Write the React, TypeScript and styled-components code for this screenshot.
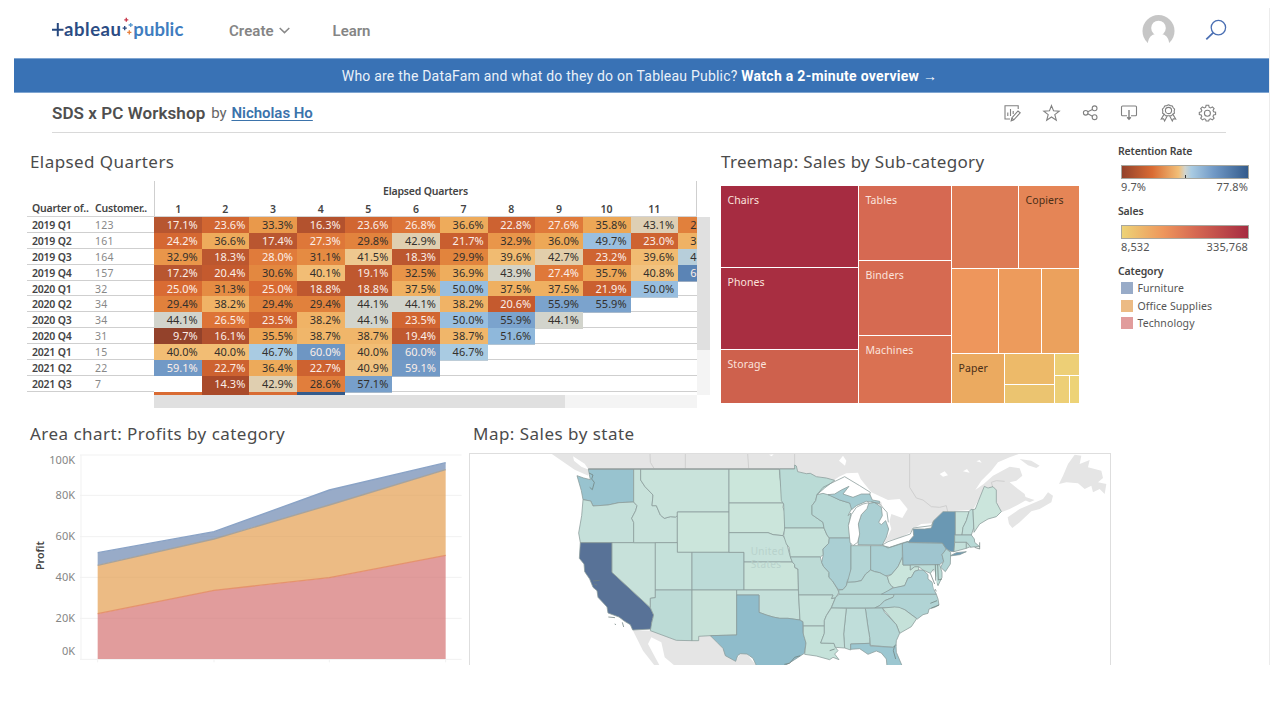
import React from "react";
import styled, { createGlobalStyle } from "styled-components";

const GlobalStyle = createGlobalStyle`
  * { box-sizing: border-box; }
  body { margin: 0; background: #fff; overflow: hidden; }
`;

const viz = `"Noto Sans", "Open Sans", sans-serif`;
const ui = `Roboto, "Liberation Sans", sans-serif`;

const Frame = styled.div`
  width: 1256px;
  height: 657px;
  margin: 8px 0 49px 14px;
  border-right: 1px solid #ececec;
  overflow: hidden;
  font-family: ${viz};
  color: #444;
`;

const Header = styled.header`
  display: flex;
  align-items: center;
  height: 50px;
  padding: 0 42px 6px 36px;
`;

const Logo = styled.svg`
  display: block;
  width: 136px;
  height: 30px;
`;

const NavItem = styled.a<{ $left: number; $track: number }>`
  display: flex;
  align-items: center;
  gap: 5px;
  margin-left: ${(p) => p.$left}px;
  padding-top: 1px;
  font: 600 15px/20px ${ui};
  letter-spacing: ${(p) => p.$track}px;
  color: #858585;
`;

const Avatar = styled.svg`
  width: 33px;
  height: 33px;
  margin-left: auto;
  margin-right: 30px;
`;

const Banner = styled.div`
  display: flex;
  align-items: center;
  justify-content: center;
  height: 35px;
  padding-right: 4px;
  background: #3972b5;
  border-top: 1px solid #7fa5d1;
  border-bottom: 1px solid #7fa5d1;
  color: #eaf1f9;
  font: 400 14px/20px ${ui};
  letter-spacing: 0.21px;
  white-space: pre;
  b { color: #fff; letter-spacing: 0.28px; }
`;

const TitleBar = styled.div`
  display: flex;
  align-items: center;
  height: 40px;
  margin: 0 43px 0 38px;
  border-bottom: 1px solid #d9d9d9;
  font-family: ${ui};
`;

const WorkbookTitle = styled.h1`
  margin: 0;
  font-size: 17px;
  font-weight: 600;
  letter-spacing: 0.08px;
  color: #4f4f4f;
`;

const Byline = styled.span`
  margin-left: 6px;
  font-size: 15px;
  color: #666;
  a {
    margin-left: 1px;
    font-size: 15px;
    font-weight: 600;
    letter-spacing: -0.03px;
    color: #3b73ab;
    text-decoration: underline;
    text-underline-offset: 2px;
  }
`;

const Toolbar = styled.div`
  display: flex;
  gap: 19px;
  margin-left: auto;
  margin-right: 9px;
  svg {
    width: 20px;
    height: 20px;
    fill: none;
    stroke: #808080;
    stroke-width: 1.1;
  }
`;

const Dashboard = styled.main`
  display: flex;
`;

const Sheets = styled.div`
  width: 1104px;
`;

const SheetRow = styled.div<{ $left: number; $gap: number }>`
  display: flex;
  gap: ${(p) => p.$gap}px;
  padding-left: ${(p) => p.$left}px;
`;

const Sheet = styled.section<{ $width: number }>`
  width: ${(p) => p.$width}px;
  flex: none;
`;

const SheetTitle = styled.h2<{ $height: number; $top: number; $indent?: number; $track: number }>`
  display: flex;
  align-items: center;
  height: ${(p) => p.$height}px;
  margin: 0;
  padding: ${(p) => p.$top}px 0 0 ${(p) => p.$indent ?? 0}px;
  font-size: 17px;
  font-weight: 400;
  letter-spacing: ${(p) => p.$track}px;
  color: #4b4b4b;
  white-space: nowrap;
`;

const Crosstab = styled.div`
  display: grid;
  grid-template-columns: 670px 13px;
  height: 227px;
`;

const TableArea = styled.div`
  height: 213.5px;
  overflow: hidden;
`;

const TableHead = styled.div`
  display: grid;
  grid-template-columns: 127px 1fr;
  height: 36px;
  border-bottom: 1px solid #d4d4d4;
  font-size: 10.5px;
  font-weight: 600;
  color: #444;
`;

const RowHeads = styled.div`
  display: grid;
  grid-template-columns: 63px 1fr;
  align-items: end;
  padding-left: 5px;
  letter-spacing: -0.22px;
  line-height: 15px;
  white-space: nowrap;
`;

const ColumnHeads = styled.div`
  border-left: 1px solid #cfcfcf;
  border-right: 1px solid #cfcfcf;
  overflow: hidden;
`;

const FieldCaption = styled.div`
  height: 20px;
  padding-top: 3px;
  letter-spacing: -0.2px;
  line-height: 15px;
  text-align: center;
`;

const Numbers = styled.div`
  display: flex;
  line-height: 17px;
  span { width: 47.67px; flex: none; text-align: center; }
  span:first-child { width: 46.5px; }
`;

const TableRow = styled.div`
  display: grid;
  grid-template-columns: 5px 63px 59px 1fr;
  height: 15.88px;
  border-bottom: 1px solid #cfcfcf;
  font-size: 11px;
  line-height: 16px;
`;

const Quarter = styled.span`
  font-size: 10.5px;
  font-weight: 600;
  letter-spacing: -0.22px;
  color: #444;
`;

const Customers = styled.span`
  font-size: 10.5px;
  letter-spacing: 0.2px;
  color: #888;
`;

const Cells = styled.div`
  display: flex;
  overflow: hidden;
  margin-bottom: -1px;
`;

const Cell = styled.span<{ $bg: string; $light: boolean }>`
  width: 47.67px;
  flex: none;
  padding-right: 4px;
  background: ${(p) => p.$bg};
  border-bottom: 1px solid rgba(205, 205, 205, 0.55);
  color: ${(p) => (p.$light ? "#fbeee8" : "#33302c")};
  text-align: right;
`;

const EdgeCell = styled(Cell)`
  padding-left: 12px;
  text-align: left;
`;

const VerticalScroll = styled.div`
  height: 178px;
  margin-top: 35.5px;
  background: #f4f4f4;
  &::before { content: ""; display: block; height: 133px; background: #e0e0e0; }
`;

const HorizontalScroll = styled.div`
  height: 13.5px;
  margin-left: 127px;
  background: #f4f4f4;
  &::before { content: ""; display: block; width: 411px; height: 100%; background: #e0e0e0; }
`;

const Treemap = styled.div`
  display: grid;
  grid-template-columns: 137px 92px 127px;
  gap: 1px;
  height: 219px;
  margin-top: 4px;
  padding: 1px 0;
`;

const Split = styled.div<{ $rows?: string; $cols?: string }>`
  display: grid;
  gap: 1px;
  min-width: 0;
  min-height: 0;
  grid-template-rows: ${(p) => p.$rows ?? "1fr"};
  grid-template-columns: ${(p) => p.$cols ?? "1fr"};
`;

const Tile = styled.div<{ $bg: string; $dark?: boolean }>`
  padding: 7px 0 0 6.5px;
  min-width: 0;
  background: ${(p) => p.$bg};
  color: ${(p) => (p.$dark ? "#4a2e17" : "#fbe3dc")};
  font-size: 10.5px;
  line-height: 15px;
  letter-spacing: 0.1px;
`;

const MapFrame = styled.div`
  height: 212px;
  border: 1px solid #dedede;
  border-bottom: 0;
  svg { display: block; }
`;

const Legends = styled.aside`
  width: 131px;
  padding-top: 11px;
  font-size: 10.5px;
  line-height: 16px;
`;

const LegendTitle = styled.h3`
  margin: 0;
  font-size: 10.5px;
  font-weight: 600;
  letter-spacing: -0.15px;
  line-height: 15px;
  color: #444;
`;

const Ramp = styled.div<{ $colors: string }>`
  display: flex;
  justify-content: center;
  align-items: flex-end;
  height: 14px;
  margin: 6px 0 0 3px;
  border: 1px solid #a8a8a0;
  background: linear-gradient(90deg, ${(p) => p.$colors});
`;

const Tick = styled.i`
  width: 1px;
  height: 3px;
  background: #333;
`;

const Range = styled.div`
  display: flex;
  justify-content: space-between;
  margin: 0 1px 9px 3px;
  font-size: 11px;
  letter-spacing: 0.1px;
  color: #555;
`;

const Entry = styled.div`
  display: flex;
  align-items: center;
  gap: 4.5px;
  height: 17.7px;
  padding-left: 3px;
  letter-spacing: 0.08px;
  color: #555;
`;

const Swatch = styled.i<{ $bg: string }>`
  width: 12px;
  height: 12px;
  background: ${(p) => p.$bg};
`;

const stops: [number, string][] = [
  [9.7, "#93422b"], [14.3, "#a94a2a"], [17.2, "#b85630"], [20.6, "#c55a2e"],
  [23.2, "#cf6431"], [25, "#d96b33"], [28, "#e07b3b"], [30, "#e2843d"],
  [33, "#e9974a"], [36, "#eda857"], [38.5, "#f0b568"], [40.5, "#f2bf78"],
  [41.5, "#eec88f"], [43, "#dfcfb2"], [44.1, "#d2d4cc"], [46.7, "#a9cbe2"],
  [49.8, "#99bfdf"], [51.6, "#8fb8db"], [55.9, "#7ba3cd"], [59.1, "#7199c6"],
  [65, "#5b84b5"], [77.8, "#335b8c"],
];

const rgb = (hex: string) => [1, 3, 5].map((i) => parseInt(hex.slice(i, i + 2), 16));

function shade(value: number) {
  const i = Math.max(1, stops.findIndex(([v]) => v >= value));
  const [v0, c0] = stops[i - 1];
  const [v1, c1] = stops[i];
  const t = Math.max(0, (value - v0) / (v1 - v0));
  const b = rgb(c1);
  return `rgb(${rgb(c0).map((x, k) => Math.round(x + (b[k] - x) * t)).join(",")})`;
}

const isLight = (v: number) => v < 28.3 || v > 58;

const rows: [string, number, (number | null)[]][] = [
  ["2019 Q1", 123, [17.1, 23.6, 33.3, 16.3, 23.6, 26.8, 36.6, 22.8, 27.6, 35.8, 43.1]],
  ["2019 Q2", 161, [24.2, 36.6, 17.4, 27.3, 29.8, 42.9, 21.7, 32.9, 36.0, 49.7, 23.0]],
  ["2019 Q3", 164, [32.9, 18.3, 28.0, 31.1, 41.5, 18.3, 29.9, 39.6, 42.7, 23.2, 39.6]],
  ["2019 Q4", 157, [17.2, 20.4, 30.6, 40.1, 19.1, 32.5, 36.9, 43.9, 27.4, 35.7, 40.8]],
  ["2020 Q1", 32, [25.0, 31.3, 25.0, 18.8, 18.8, 37.5, 50.0, 37.5, 37.5, 21.9, 50.0]],
  ["2020 Q2", 34, [29.4, 38.2, 29.4, 29.4, 44.1, 44.1, 38.2, 20.6, 55.9, 55.9]],
  ["2020 Q3", 34, [44.1, 26.5, 23.5, 38.2, 44.1, 23.5, 50.0, 55.9, 44.1]],
  ["2020 Q4", 31, [9.7, 16.1, 35.5, 38.7, 38.7, 19.4, 38.7, 51.6]],
  ["2021 Q1", 15, [40.0, 40.0, 46.7, 60.0, 40.0, 60.0, 46.7]],
  ["2021 Q2", 22, [59.1, 22.7, 36.4, 22.7, 40.9, 59.1]],
  ["2021 Q3", 7, [null, 14.3, 42.9, 28.6, 57.1]],
];

const edge: [string, number][] = [["2", 29], ["3", 38], ["4", 45.8], ["6", 65]];

type Shape = [string, string];

const west: Shape[] = [
  ["#98c3cf", "352,180 372,187 392,192 388,172 386,160 522,160 522,259 478,261 445,268 400,271 393,256 370,252 365,225"],
  ["#c5e0da", "370,252 393,256 400,271 445,268 478,261 522,259 532,270 528,285 516,308 522,320 522,381 362,381 357,352 366,300"],
  ["#587297", "362,381 457,381 457,470 572,576 582,598 576,622 578,640 519,643 512,627 495,617 478,604 445,592 442,574 415,545 412,525 400,515 390,490 375,468 373,445 359,428"],
  ["#c7e1da", "457,381 587,381 587,546 572,548 572,576 457,470"],
  ["#c8e2db", "522,160 543,160 543,193 556,213 580,238 577,270 590,270 602,298 614,308 632,303 648,304 653,298 653,381 522,381 522,320 516,308 528,285 532,270 522,259"],
  ["#c9e3db", "543,160 808,160 808,289 653,289 653,300 648,304 632,303 614,308 602,298 590,270 577,270 580,238 556,213 543,193"],
  ["#cbe5db", "653,289 808,289 808,410 653,410"],
  ["#c5e1da", "587,381 653,381 653,410 697,410 697,523 587,523"],
  ["#bcdbd7", "697,410 853,410 853,523 697,523"],
  ["#bcdbd6", "587,523 697,523 697,675 650,674 572,645 576,622 582,598 572,576 572,548 587,546"],
  ["#c8e2d9", "697,523 831,523 831,658 752,660 717,662 717,675 697,675"],
  ["#cbe6db", "808,160 959,160 960,180 966,220 972,262 808,262"],
  ["#cbe5db", "808,262 972,262 970,275 976,290 976,340 970,360 940,357 925,351 808,351"],
  ["#c7e2db", "808,351 925,351 940,357 970,360 980,375 988,410 998,439 853,439 853,410 808,410"],
  ["#cae4da", "853,439 998,439 1005,447 1005,455 1015,462 1016,523 853,523"],
  ["#c5e0da", "831,523 1016,523 1021,613 985,608 960,608 940,604 920,598 898,590 898,538 831,538"],
  ["#8fbccb", "831,538 898,538 898,590 920,598 940,604 960,608 985,608 1021,613 1030,618 1030,650 1039,682 1034,713 1000,735 975,750 890,750 880,728 862,715 842,714 834,720 828,737 797,720 790,698 772,680 752,660 831,658"],
];

const east: Shape[] = [
  ["#badbd6", "0,85 45,85 45,73 50,76 54,93 80,99 92,98 110,108 140,112 165,119 135,142 112,162 108,180 97,195 97,222 130,245 133,262 15,262 12,190 5,180"],
  ["#c6e2da", "15,262 133,262 142,283 149,292 147,308 130,325 131,342 122,349 32,349 28,320 20,310 12,285"],
  ["#bddbd6", "32,349 122,349 126,365 132,378 148,395 148,410 158,420 172,443 178,455 167,472 155,474 160,463 57,463 55,385 45,380 45,372 38,364"],
  ["#c5e1da", "57,463 160,463 155,474 167,472 155,500 140,525 134,540 134,556 71,556 70,543 61,538"],
  ["#c5e2da", "71,556 134,556 134,578 123,607 163,608 167,620 175,630 165,640 178,657 160,650 150,657 110,646 75,641 79,607 71,580"],
  ["#b8d9d6", "112,162 130,158 155,165 180,178 210,187 218,200 205,225 214,217 208,250 211,292 149,292 142,283 133,262 130,245 97,222 97,195 108,180"],
  ["#aacfd3", "149,292 211,292 214,310 214,385 210,410 203,420 200,435 190,447 175,446 158,420 148,410 148,395 132,378 126,365 131,342 130,325 147,308"],
  ["#b3d5d5", "214,315 273,315 273,388 258,400 245,420 225,424 203,425 214,385"],
  ["#abd0d4", "273,315 308,315 330,320 368,307 368,350 355,378 335,402 315,406 300,396 285,393 273,388"],
  ["#aacfd3", "235,312 238,280 235,250 245,222 260,205 262,190 285,185 305,200 308,225 297,245 305,252 318,240 327,265 320,290 308,313"],
  ["#a5ccd2", "145,162 165,160 185,148 208,137 190,160 220,170 245,160 270,160 278,178 300,182 300,188 260,182 230,195 216,207 210,187 180,178"],
  ["#b8d9d6", "178,461 177,448 190,447 200,435 203,425 225,424 245,420 258,400 273,388 285,393 300,396 323,408 328,425 340,440 320,455 305,461"],
  ["#b9d9d6", "168,470 178,461 344,461 340,470 315,480 300,495 285,502 155,502"],
  ["#cae5dc", "323,408 335,402 355,378 368,350 370,373 392,373 392,388 405,378 417,378 417,388 405,392 395,410 385,412 375,435 345,442 335,436 328,425"],
  ["#abd0d4", "305,461 340,442 375,435 385,412 395,410 405,392 417,388 430,388 445,402 445,415 458,425 462,445 470,461"],
  ["#b1d4d5", "285,502 300,495 315,480 340,470 344,461 470,461 475,475 478,493 465,500 448,505 445,518 430,522 413,535 375,507 345,500"],
  ["#c5e1d9", "308,502 345,499 358,500 375,507 411,534 395,558 360,578 350,552"],
  ["#b5d7d6", "257,503 308,502 315,515 350,552 360,578 350,600 349,615 340,620 272,614 270,590 265,560"],
  ["#c0deda", "200,503 257,503 265,560 270,590 270,608 213,610 213,628 195,622 192,580"],
  ["#c4e0da", "155,502 200,503 192,580 195,622 167,620 163,608 123,607 134,578 134,540 140,525"],
  ["#9cc7d1", "213,610 270,608 272,616 340,620 349,612 350,635 368,677 322,677 320,655 305,637 290,631 265,641 240,624 213,626"],
  ["#9fc5cf", "368,307 385,302 388,306 488,307 500,325 487,342 492,362 480,372 370,373"],
  ["#6a98b3", "385,305 402,285 400,265 435,265 455,262 462,240 490,213 527,213 527,283 523,333 512,332 500,325 488,307"],
  ["#6a98b3", "510,346 530,336 560,333 540,342"],
  ["#b1d4d5", "500,325 513,335 512,370 497,393 483,380 492,362 487,342"],
  ["#bcdcd7", "392,373 480,372 487,395 487,410 475,435 468,420 462,385 452,398 430,388 417,378 405,378 392,388"],
  ["#c8e3dc", "527,213 568,213 560,240 550,260 547,283 527,283"],
  ["#c1dfda", "568,213 574,206 580,207 582,262 575,283 547,283 550,260 560,240"],
  ["#cbe5dc", "580,207 587,205 600,172 614,137 625,142 640,138 650,148 650,185 665,213 650,228 625,235 600,250 583,275"],
  ["#b8d9d6", "525,283 575,283 584,295 585,305 600,318 588,318 572,320 562,305 525,305"],
  ["#c3e0da", "525,305 560,305 560,323 523,333"],
  ["#c3e0da", "560,305 572,318 560,323"],
];

const details = "M388,172 400,178 396,190 404,200 398,222 390,215 M400,496 420,494 M404,505 412,508 M446,604 466,606 M488,620 492,634 M465,625 469,627";
const eastDetails = "M452,398 465,430 M467,372 468,420 M474,372 476,418 487,415 M466,445 470,452 M452,488 472,480 M455,502 478,493 M345,615 341,630 348,655 M600,305 600,325 585,320 M150,630 165,625 M62,645 45,650 30,668 14,671";

function StateMap() {
  return (
    <svg width="640" height="211" viewBox="31 115 1920 633" preserveAspectRatio="none">
      <g fill="#e5e5e5">
        <path d="M275,114 L345,162 L386,180 L386,160 L1010,160 L1010,114Z" />
        <path d="M519,643 L572,645 L650,674 L717,675 L717,662 L752,660 L790,698 L828,737 L842,714 L862,715 L890,750 L645,750 L615,725 L605,680 L575,665 L565,685 L600,750 L585,750 L550,705Z" />
        <g transform="translate(960 75)">
          <path d="M0,39 H720 L690,50 655,65 635,90 605,120 587,148 612,130 640,105 690,78 720,83 728,105 710,120 690,125 715,145 735,160 740,178 715,192 690,205 665,215 650,185 650,148 625,140 614,137 600,172 580,207 490,213 462,240 455,255 400,260 392,280 365,294 325,312 315,305 335,265 325,230 305,195 290,180 250,150 195,108 165,119 110,108 54,93 45,85 H0Z" />
          <path d="M684,230 L720,205 755,190 790,175 805,155 820,165 815,185 780,205 755,212 720,245 698,262 688,250Z M727,165 755,175 765,178 750,185 735,178Z M720,55 755,60 780,75 770,82 745,74Z M838,130 L850,105 865,70 885,42 905,45 900,70 930,58 925,80 965,90 970,112 955,125 980,130 975,160 960,145 940,155 935,135 915,145 895,128 860,125Z" />
        </g>
      </g>
      <g fill="none" stroke="#cfcfcf" strokeWidth="3">
        <path d="M571,114 572,140 583,158 M677,114V158 M864,114 867,158" />
        <path transform="translate(960 75)" d="M45,39V85 M390,39 390,140 410,172 430,178 455,198 480,200 500,195 504,213 M640,142 635,125 650,120 675,122" />
      </g>
      <path fill="#fff" d="M340,122 375,144 387,162 365,153 343,135Z M928,117 942,116 936,122Z" />
      <g transform="translate(960 75)" fill="#fff">
        <path d="M135,142 160,120 178,108 200,98 235,96 243,115 275,155 325,178 360,175 384,205 368,232 335,220 325,260 318,238 305,185 250,175 210,200 190,170 140,162 112,162Z M308,313 325,300 365,290 392,275 400,264 425,250 457,248 462,256 440,266 402,285 385,303 330,322Z M178,60 190,45 200,60 196,75Z M480,100 495,92 505,104 490,108Z M550,92 562,85 570,96Z M590,62 600,58 606,66Z" />
      </g>
      <g stroke="#8a9c9a" strokeWidth="2.3" strokeLinejoin="round">
        {west.map(([fill, points]) => <polygon key={points} fill={fill} points={points} />)}
        <path fill="none" stroke="#71817f" d={details} />
        <path fill="none" stroke="#8d9493" strokeWidth="3" d="M386,160H1005" />
        <g transform="translate(960 75)">
          {east.map(([fill, points]) => <polygon key={points} fill={fill} points={points} />)}
          <path fill="#fff" d="M211,305 L206,255 215,222 230,200 250,190 268,186 262,204 245,222 236,250 240,280 234,305 220,315Z" />
          <path fill="none" d="M112,162 130,140 160,125 195,108 240,135 272,155 M272,155 270,162 M275,183 300,190 322,215 326,245 M308,313 325,303 392,280 400,262 455,255 462,240 M308,313 325,322 385,303" />
          <path fill="#fff" stroke="none" d="M463,385 470,410 472,440 463,448 458,420Z" />
          <path fill="none" stroke="#71817f" d={eastDetails} />
        </g>
      </g>
      <g fill="#b8d2cc" fontFamily={viz} fontSize="30" letterSpacing="1">
        <text x="873" y="418">United</text>
        <text x="873" y="458">States</text>
      </g>
    </svg>
  );
}

function ProfitChart() {
  const grid: [string, number, number][] = [
    ["100K", 120, 148], ["80K", 241, 252], ["60K", 365, 376],
    ["40K", 487, 497], ["20K", 610, 621], ["0K", 733, 719],
  ];
  return (
    <svg width="433" height="212" viewBox="30 114 1299 636" display="block">
      <g stroke="#f1f1f1" strokeWidth="3">
        {grid.map(([label, y]) => <line key={label} x1="180" x2="1325" y1={y} y2={y} />)}
        <path d="M183,120V733 M233,733V742 M582,733V742 M928,733V742 M1277,733V742" />
      </g>
      <polygon fill="#98abc8" points="233,413 582,350 928,225 1277,143 1277,164 928,270 582,372 233,451" />
      <polygon fill="#ecbb84" points="233,451 582,372 928,270 1277,164 1277,421 928,488 582,526 233,596" />
      <polygon fill="#e19c9c" points="233,596 582,526 928,488 1277,421 1277,732 233,732" />
      <g fill="none" strokeWidth="4">
        <polyline stroke="#8aa3c6" points="233,413 582,350 928,225 1277,143" />
        <polyline stroke="#a7a39c" points="233,451 582,372 928,270 1277,164" />
        <polyline stroke="#e5936c" points="233,596 582,526 928,488 1277,421" />
      </g>
      <g stroke="#000" strokeOpacity=".025" strokeWidth="3">
        <path d="M540,365H1277 M233,487H1277 M233,610H1277 M1020,241H1277" />
      </g>
      <g fontFamily={viz} fontSize="33" fill="#858585" textAnchor="end">
        {grid.map(([label, , y]) => <text key={label} x="165" y={y}>{label}</text>)}
      </g>
      <text transform="translate(73 422) rotate(-90)" textAnchor="middle" fontFamily={viz} fontSize="32" fontWeight="600" fill="#444">Profit</text>
    </svg>
  );
}

function BrandLogo() {
  return (
    <Logo viewBox="50 15 136 30">
      <path d="M52,29.7H63.5 M57.8,23V36.2" fill="none" stroke="#26487f" strokeWidth="2" />
      <g fontFamily="Lato, sans-serif" fontSize="18.5" fontWeight="700">
        <text x="64" y="36.2" fill="#2b4c84" textLength="57" lengthAdjust="spacing">ableau</text>
        <text x="133.3" y="36.2" fill="#3f7dc0" textLength="50" lengthAdjust="spacing">public</text>
      </g>
      <g fill="none" strokeWidth="1.3">
        <path stroke="#c8374b" d="M124.3,19.8H128.3 M126.3,17.8V21.8" />
        <path stroke="#26487f" d="M122.6,28.2H126.8 M124.7,26.1V30.3" />
        <path stroke="#5b9bd0" d="M128.6,25H132.8 M130.7,22.9V27.1" />
        <path stroke="#e7803c" d="M127.2,32.4H131.4 M129.3,30.3V34.5" />
      </g>
    </Logo>
  );
}

function Actions() {
  return (
    <Toolbar>
      <svg viewBox="0 0 20 20">
        <path d="M8,16H3V2.8H16.2V6 M5.8,13V9.5 M8.5,13V6 M11.2,11V8 M9.2,17.8 9.8,15 16,8 18.2,9.8 11.8,16.8Z M9.8,15 11.8,16.8" />
      </svg>
      <svg viewBox="0 0 20 20">
        <path d="M10.5,2.6 12.5,7.8 18.2,8.1 13.8,11.6 15.3,17.2 10.5,14 5.7,17.2 7.2,11.6 2.8,8.1 8.5,7.8Z" />
      </svg>
      <svg viewBox="0 0 20 20">
        <circle cx="5.7" cy="9.8" r="2.3" />
        <circle cx="14.6" cy="5.3" r="2.4" />
        <circle cx="14.6" cy="14.2" r="2.4" />
        <path d="M7.8,8.8 12.4,6.4 M7.8,10.8 12.4,13.2" />
      </svg>
      <svg viewBox="0 0 20 20">
        <path d="M8,12.8H3.5Q2.5,12.8 2.5,11.8V4Q2.5,3 3.5,3H16.5Q17.5,3 17.5,4V11.8Q17.5,12.8 16.5,12.8H12" />
        <path d="M10,7V16.3 M8.2,14.3 10,16.3 11.8,14.3" strokeWidth="1.4" />
      </svg>
      <svg viewBox="0 0 20 20">
        <path d="M10.5,1.8 12.3,2.6 14.3,2.9 15.2,4.8 16.6,6.2 16.2,8.2 16.4,10.2 14.7,11.2 13.5,12.8 11.5,12.7 9.5,12.7 7.5,12.8 6.3,11.2 4.6,10.2 4.8,8.2 4.4,6.2 5.8,4.8 6.7,2.9 8.7,2.6Z" />
        <circle cx="10.5" cy="7.5" r="3.1" />
        <path d="M6,11.4 3.2,16 5.6,15.8 6.6,18 9.2,13 M14.9,11.4 17.7,16 15.3,15.8 14.3,18 11.7,13" />
      </svg>
      <svg viewBox="0 0 20 20">
        <path d="M9.1,2.3H11.7L12.2,4.4 13.6,5 15.4,3.9 17.1,5.6 16,7.4 16.6,8.8 18.6,9.3V11.5L16.6,12 16,13.4 17.1,15.2 15.4,16.9 13.6,15.8 12.2,16.3 11.7,18H9.1L8.6,16.3 7.2,15.8 5.4,16.9 3.7,15.2 4.8,13.4 4.2,12 2.3,11.5V9.3L4.2,8.8 4.8,7.4 3.7,5.6 5.4,3.9 7.2,5 8.6,4.4Z" />
        <circle cx="10.4" cy="10.3" r="3" />
      </svg>
    </Toolbar>
  );
}

export default function App() {
  return (
    <Frame>
      <GlobalStyle />
      <Header>
        <BrandLogo />
        <NavItem $left={43} $track={0.05}>
          Create
          <svg width="11" height="7" viewBox="0 0 11 7" fill="none" stroke="#898989" strokeWidth="1.5">
            <path d="M.7,1 5.5,5.6 10.3,1" />
          </svg>
        </NavItem>
        <NavItem $left={43} $track={-0.05}>Learn</NavItem>
        <Avatar viewBox="0 0 33 33">
          <circle cx="16.5" cy="17" r="16" fill="#c6c6c6" />
          <circle cx="16.5" cy="14" r="7.3" fill="#fff" />
          <path d="M6,33V28Q7,21.5 13,20H20Q26,21.5 27,28V33Z M0,29H33V33H0Z" fill="#fff" />
        </Avatar>
        <svg width="22" height="22" viewBox="0 0 22 22" fill="none" stroke="#4a6fb3" strokeWidth="1.3">
          <circle cx="13.4" cy="8.6" r="7.2" />
          <path d="M8.3,13.7 1.3,20.3" strokeWidth="1.8" />
        </svg>
      </Header>
      <Banner>
        Who are the DataFam and what do they do on Tableau Public? <b>Watch a 2-minute overview →</b>
      </Banner>
      <TitleBar>
        <WorkbookTitle>SDS x PC Workshop</WorkbookTitle>
        <Byline>by <a>Nicholas Ho</a></Byline>
        <Actions />
      </TitleBar>
      <Dashboard>
        <Sheets>
          <SheetRow $left={13} $gap={11}>
            <Sheet $width={683}>
              <SheetTitle $height={48} $top={8} $indent={3} $track={0.42}>Elapsed Quarters</SheetTitle>
              <Crosstab>
                <div>
                  <TableArea>
                    <TableHead>
                      <RowHeads><span>Quarter of..</span><span>Customer..</span></RowHeads>
                      <ColumnHeads>
                        <FieldCaption>Elapsed Quarters</FieldCaption>
                        <Numbers>{Array.from({ length: 11 }, (_, i) => <span key={i}>{i + 1}</span>)}</Numbers>
                      </ColumnHeads>
                    </TableHead>
                    {rows.map(([quarter, count, values], r) => (
                      <TableRow key={quarter}>
                        <i />
                        <Quarter>{quarter}</Quarter>
                        <Customers>{count}</Customers>
                        <Cells>
                          {values.map((v, i) => v === null
                            ? <Cell key={i} $bg="#fff" $light={false} />
                            : <Cell key={i} $bg={shade(v)} $light={isLight(v)}>{v.toFixed(1)}%</Cell>)}
                          {edge[r] && <EdgeCell $bg={shade(edge[r][1])} $light={edge[r][1] > 58}>{edge[r][0]}</EdgeCell>}
                        </Cells>
                      </TableRow>
                    ))}
                    <TableRow>
                      <i /><i /><i />
                      <Cells>
                        {[25, 14.3, 25, 77.8].map((v, i) => <Cell key={i} $bg={shade(v)} $light />)}
                      </Cells>
                    </TableRow>
                  </TableArea>
                  <HorizontalScroll />
                </div>
                <VerticalScroll />
              </Crosstab>
            </Sheet>
            <Sheet $width={359}>
              <SheetTitle $height={48} $top={8} $track={0.33}>Treemap: Sales by Sub-category</SheetTitle>
              <Treemap>
                <Split $rows="81px 81px 1fr">
                  <Tile $bg="#a62c41">Chairs</Tile>
                  <Tile $bg="#a82e41">Phones</Tile>
                  <Tile $bg="#ce614d">Storage</Tile>
                </Split>
                <Split $rows="74px 74px 1fr">
                  <Tile $bg="#d66952">Tables</Tile>
                  <Tile $bg="#d66a51">Binders</Tile>
                  <Tile $bg="#da7152">Machines</Tile>
                </Split>
                <Split $rows="82px 84px 1fr">
                  <Split $cols="66px 1fr">
                    <Tile $bg="#de7b55" />
                    <Tile $bg="#e58556" $dark>Copiers</Tile>
                  </Split>
                  <Split $cols="46px 42px 1fr">
                    <Tile $bg="#ee965c" />
                    <Tile $bg="#ed9b5c" />
                    <Tile $bg="#eba15d" />
                  </Split>
                  <Split $cols="52px 49px 1fr">
                    <Tile $bg="#ebaa60" $dark>Paper</Tile>
                    <Split $rows="30px 1fr">
                      <Tile $bg="#edba69" />
                      <Tile $bg="#ebc470" />
                    </Split>
                    <Split $rows="21px 1fr">
                      <Tile $bg="#edcf76" />
                      <Split $cols="14px 1fr">
                        <Tile $bg="#edcf76" />
                        <Tile $bg="#edd377" />
                      </Split>
                    </Split>
                  </Split>
                </Split>
              </Treemap>
            </Sheet>
          </SheetRow>
          <SheetRow $left={16} $gap={6}>
            <Sheet $width={433}>
              <SheetTitle $height={45} $top={5} $track={0.47}>Area chart: Profits by category</SheetTitle>
              <ProfitChart />
            </Sheet>
            <Sheet $width={642}>
              <SheetTitle $height={45} $top={5} $indent={4} $track={0.48}>Map: Sales by state</SheetTitle>
              <MapFrame><StateMap /></MapFrame>
            </Sheet>
          </SheetRow>
        </Sheets>
        <Legends>
          <LegendTitle>Retention Rate</LegendTitle>
          <Ramp $colors="#93422b, #d96b33 24%, #f2bf78 45%, #d2d4cc 50%, #a9cbe2 55%, #7199c6 73%, #335b8c"><Tick /></Ramp>
          <Range><span>9.7%</span><span>77.8%</span></Range>
          <LegendTitle>Sales</LegendTitle>
          <Ramp $colors="#edd377, #ee965c 33%, #d66952 58%, #a62c41" />
          <Range><span>8,532</span><span>335,768</span></Range>
          <LegendTitle>Category</LegendTitle>
          <Entry><Swatch $bg="#98abc8" />Furniture</Entry>
          <Entry><Swatch $bg="#ecbb84" />Office Supplies</Entry>
          <Entry><Swatch $bg="#e19c9c" />Technology</Entry>
        </Legends>
      </Dashboard>
    </Frame>
  );
}
